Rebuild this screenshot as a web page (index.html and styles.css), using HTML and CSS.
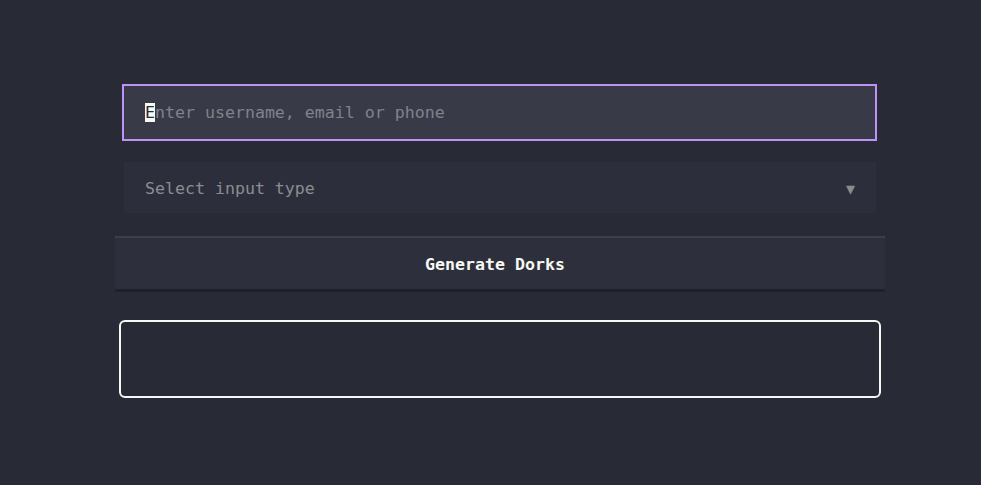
FILE: index.html
```html
<!DOCTYPE html>
<html lang="en">
<head>
<meta charset="utf-8">
<title>Dork Generator</title>
<link rel="stylesheet" href="styles.css">
</head>
<body>
<main class="wrap">
  <div class="field">
    <input class="query" type="text" placeholder="Enter username, email or phone">
    <span class="caret">E</span>
  </div>
  <div class="select">
    <span class="select-label">Select input type</span>
    <span class="select-arrow">▼</span>
  </div>
  <button class="generate" type="button">Generate Dorks</button>
  <div class="output"></div>
</main>
</body>
</html>
```
FILE: styles.css
```css
html, body {
  margin: 0;
  padding: 0;
  background: #282a36;
  height: 100%;
}
body {
  font-family: "DejaVu Sans Mono", "Liberation Mono", monospace;
  font-size: 16.6px;
  color: #f8f8f2;
}
.wrap {
  width: 770px;
  margin-left: 115px;
  padding-top: 84px;
  display: flex;
  flex-direction: column;
}
.field {
  position: relative;
  margin: 0 8px 0 7px;
}
.query {
  box-sizing: border-box;
  display: block;
  width: 100%;
  height: 57px;
  margin: 0;
  padding: 0 21px;
  border: 2px solid #bd93f9;
  background: #383a48;
  color: #f8f8f2;
  font-family: inherit;
  font-size: 16.6px;
  outline: none;
}
.query::placeholder {
  color: #80828c;
  opacity: 1;
}
.caret {
  position: absolute;
  left: 23px;
  top: 19px;
  width: 10px;
  height: 19px;
  background: #f8f8f2;
  color: #282a36;
  font-size: 16.6px;
  line-height: 19px;
  overflow: hidden;
}
.select {
  box-sizing: border-box;
  margin: 21px 9px 0 9px;
  height: 51px;
  padding: 2px 21px 0 21px;
  background: #2c2f3b;
  display: flex;
  align-items: center;
  justify-content: space-between;
  color: #8b8c92;
}
.select-arrow {
  font-size: 15px;
  color: #8b8c92;
}
.generate {
  box-sizing: border-box;
  margin-top: 23px;
  height: 56px;
  width: 100%;
  padding: 2px 0 0 0;
  background: #2d303c;
  border: none;
  border-top: 2px solid #3b3e4b;
  border-bottom: 3px solid #1f2029;
  color: #f8f8f2;
  font-family: inherit;
  font-size: 16.6px;
  font-weight: bold;
  text-indent: -10px;
}
.output {
  box-sizing: border-box;
  margin: 28px 4px 0 4px;
  height: 78px;
  border: 2px solid #f8f8f2;
  border-radius: 6px;
  background: #282a36;
}
```
